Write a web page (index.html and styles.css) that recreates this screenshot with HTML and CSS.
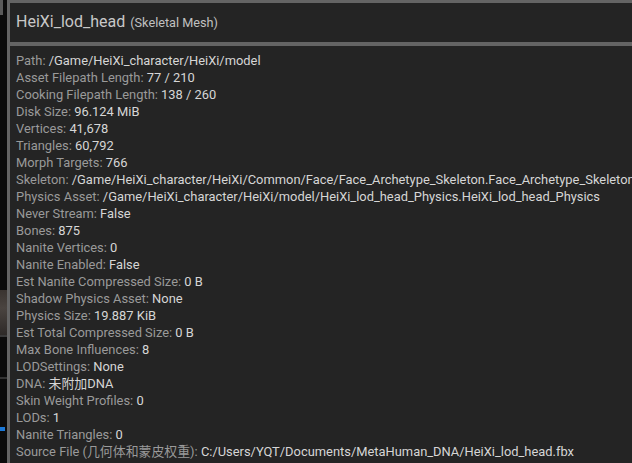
FILE: index.html
```html
<!DOCTYPE html>
<html>
<head>
<meta charset="utf-8">
<link rel="stylesheet" href="styles.css">
</head>
<body>
<div class="screen">
  <div class="backdrop">
    <div class="bd-top"></div>
    <div class="bd-gap1"></div>
    <div class="bd-img"></div>
    <div class="bd-line"></div>
    <div class="bd-gap2"></div>
    <div class="bd-line2"></div>
    <div class="bd-gap3"></div>
    <div class="bd-blue"></div>
  </div>
  <div class="tooltip">
    <div class="header">
      <span class="title">HeiXi_lod_head</span>
      <span class="type">(Skeletal Mesh)</span>
    </div>
    <div class="body">
      <div class="row"><span class="k">Path:</span> <span class="v">/Game/HeiXi_character/HeiXi/model</span></div>
      <div class="row"><span class="k">Asset Filepath Length:</span> <span class="v">77 / 210</span></div>
      <div class="row"><span class="k">Cooking Filepath Length:</span> <span class="v">138 / 260</span></div>
      <div class="row"><span class="k">Disk Size:</span> <span class="v">96.124 MiB</span></div>
      <div class="row"><span class="k">Vertices:</span> <span class="v">41,678</span></div>
      <div class="row"><span class="k">Triangles:</span> <span class="v">60,792</span></div>
      <div class="row"><span class="k">Morph Targets:</span> <span class="v">766</span></div>
      <div class="row"><span class="k">Skeleton:</span> <span class="v">/Game/HeiXi_character/HeiXi/Common/Face/Face_Archetype_Skeleton.Face_Archetype_Skeleton</span></div>
      <div class="row"><span class="k">Physics Asset:</span> <span class="v">/Game/HeiXi_character/HeiXi/model/HeiXi_lod_head_Physics.HeiXi_lod_head_Physics</span></div>
      <div class="row"><span class="k">Never Stream:</span> <span class="v">False</span></div>
      <div class="row"><span class="k">Bones:</span> <span class="v">875</span></div>
      <div class="row"><span class="k">Nanite Vertices:</span> <span class="v">0</span></div>
      <div class="row"><span class="k">Nanite Enabled:</span> <span class="v">False</span></div>
      <div class="row"><span class="k">Est Nanite Compressed Size:</span> <span class="v">0 B</span></div>
      <div class="row"><span class="k">Shadow Physics Asset:</span> <span class="v">None</span></div>
      <div class="row"><span class="k">Physics Size:</span> <span class="v">19.887 KiB</span></div>
      <div class="row"><span class="k">Est Total Compressed Size:</span> <span class="v">0 B</span></div>
      <div class="row"><span class="k">Max Bone Influences:</span> <span class="v">8</span></div>
      <div class="row"><span class="k">LODSettings:</span> <span class="v">None</span></div>
      <div class="row"><span class="k">DNA:</span> <span class="v">未附加DNA</span></div>
      <div class="row"><span class="k">Skin Weight Profiles:</span> <span class="v">0</span></div>
      <div class="row"><span class="k">LODs:</span> <span class="v">1</span></div>
      <div class="row"><span class="k">Nanite Triangles:</span> <span class="v">0</span></div>
      <div class="row"><span class="k">Source File (几何体和蒙皮权重):</span> <span class="v">C:/Users/YQT/Documents/MetaHuman_DNA/HeiXi_lod_head.fbx</span></div>
    </div>
  </div>
</div>
</body>
</html>
```

FILE: styles.css
```css
html, body {
  margin: 0;
  padding: 0;
  width: 632px;
  height: 463px;
  overflow: hidden;
  background: #0a0a0a;
}

.screen {
  display: flex;
  width: 632px;
  height: 463px;
  overflow: hidden;
}

.backdrop {
  width: 7px;
  flex: none;
  display: flex;
  flex-direction: column;
  background: #0b0b0b;
}

.bd-top {
  width: 3px;
  height: 15px;
  background: #5a5a5a;
}
.bd-gap1 { height: 275px; }
.bd-img {
  height: 45px;
  background: linear-gradient(180deg, #3a3430, #4a4440 40%, #2e2a28);
}
.bd-line {
  height: 2px;
  background: #3a3a3a;
}
.bd-gap2 { height: 40px; }
.bd-line2 {
  height: 2px;
  background: #333;
}
.bd-gap3 { height: 48px; }
.bd-blue {
  height: 4px;
  width: 5px;
  background: #1a78d8;
}

.tooltip {
  flex: none;
  width: 700px;
  background: #646464;
  padding: 3px 0 0 3px;
  display: flex;
  flex-direction: column;
  gap: 4px;
  font-family: Roboto, "Noto Sans CJK SC", sans-serif;
}

.header {
  height: 39px;
  background: #242424;
  display: flex;
  align-items: center;
  padding-left: 6px;
  gap: 5px;
  white-space: nowrap;
}

.title {
  font-size: 16px;
  color: #c8c8c8;
  position: relative;
  top: -1px;
}

.type {
  font-size: 12.7px;
  color: #c0c0c0;
}

.body {
  flex: 1;
  background: #242424;
  padding: 6px 0 0 6px;
}

.row {
  height: 17px;
  line-height: 17px;
  font-size: 12.9px;
  white-space: nowrap;
}

.k {
  color: #9a9a9a;
}

.v {
  color: #d6d6d6;
}
```
